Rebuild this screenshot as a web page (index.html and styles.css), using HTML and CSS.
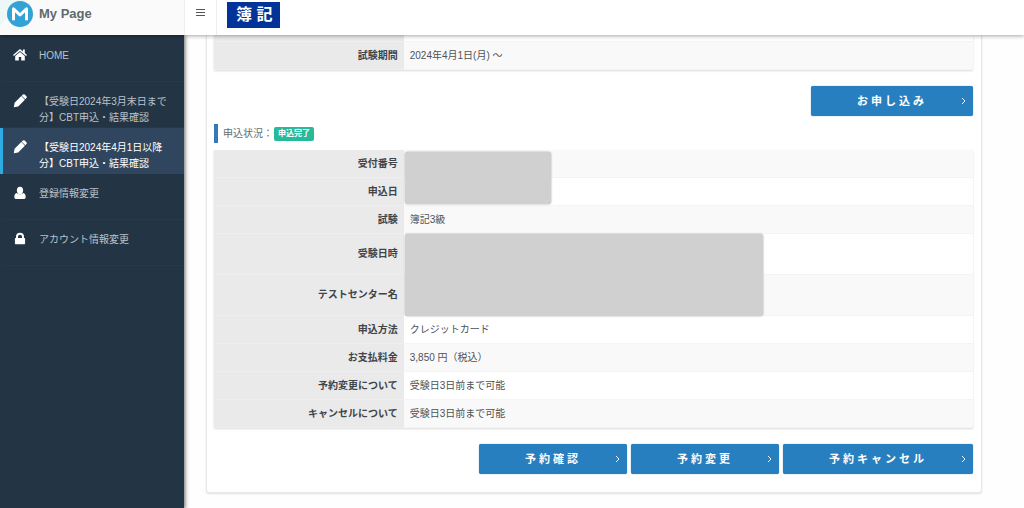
FILE: index.html
```
<!DOCTYPE html>
<html lang="ja">
<head>
<meta charset="utf-8">
<meta name="viewport" content="width=device-width, initial-scale=1">
<title>My Page</title>
<link rel="stylesheet" href="styles.css">
</head>
<body>
<svg class="sprite" aria-hidden="true">
  <symbol id="pencil" viewBox="0 0 14 14">
    <path d="M.8 13.200l.8-4.400L8.300 2.100 11.900 5.700 5.200 12.400zM8.700 1.700L9.900.6q.9-.8 1.800 0l1.700 1.700q.8.900 0 1.800l-1.100 1.200z"/>
  </symbol>
  <symbol id="chevron" viewBox="0 0 5 8">
    <path d="M1 1l3 3-3 3"/>
  </symbol>
</svg>
<header class="header">
  <a class="brand" href="#">
    <svg class="brand-mark" viewBox="0 0 26 26" aria-hidden="true">
      <circle cx="13" cy="13" r="13"/>
      <path d="M6.500 19.200V7.800L13 14l6.500-6.200V19.200"/>
    </svg>
    <span>My Page</span>
  </a>
  <button class="toggle" type="button" aria-label="メニュー">
    <svg viewBox="0 0 9 9" aria-hidden="true"><path d="M0 1.500h9M0 4.500h9M0 7.500h9"/></svg>
  </button>
  <a class="logo" href="#">簿 記</a>
</header>
<div class="layout">
  <nav class="sidebar">
    <a class="item" href="#">
      <svg class="icon" viewBox="0 0 14 14" aria-hidden="true"><path d="M7 1L0 7l.9 1L7 2.900 13.100 8l.9-1-2.200-1.900V1.600H9.900v1.900zM7 4L2.200 8v4.600h3.600V9h2.400v3.600h3.600V8z"/></svg>
      <span>HOME</span>
    </a>
    <a class="item" href="#">
      <svg class="icon" aria-hidden="true"><use href="#pencil"/></svg>
      <span>【受験日2024年3月末日まで分】CBT申込・結果確認</span>
    </a>
    <a class="item active" href="#" aria-current="page">
      <svg class="icon" aria-hidden="true"><use href="#pencil"/></svg>
      <span>【受験日2024年4月1日以降分】CBT申込・結果確認</span>
    </a>
    <a class="item" href="#">
      <svg class="icon" viewBox="0 0 14 14" aria-hidden="true"><ellipse cx="7" cy="4.400" rx="3.100" ry="3.600"/><path d="M3.700 6.900Q7 9.800 10.300 6.900 12.700 7.300 12.700 11.200q0 1.800-1.700 1.800H3Q1.300 13 1.300 11.200 1.300 7.300 3.700 6.900z"/></svg>
      <span>登録情報変更</span>
    </a>
    <a class="item" href="#">
      <svg class="icon" viewBox="0 0 14 14" aria-hidden="true"><path fill-rule="evenodd" d="M3 6V4.800a4 4 0 0 1 8 0V6h.4q.7 0 .7.7v4.800q0 .7-.7.700H2.600q-.7 0-.7-.7V6.700q0-.7.7-.7zM5 6h4V4.800a2 2 0 0 0-4 0z"/></svg>
      <span>アカウント情報変更</span>
    </a>
  </nav>
  <main class="main">
    <section class="card">
      <table class="info">
        <tbody>
          <tr class="partial"><th></th><td></td></tr>
          <tr class="shaded"><th scope="row">試験期間</th><td>2024年4月1日(月) ～</td></tr>
        </tbody>
      </table>
      <div class="actions">
        <button class="btn" type="button">お申し込み<svg aria-hidden="true"><use href="#chevron"/></svg></button>
      </div>
      <h2 class="status">申込状況：<span class="badge">申込完了</span></h2>
      <table class="info">
        <tbody>
          <tr class="shaded"><th scope="row">受付番号</th><td class="masked"><span class="mask mask-small"></span></td></tr>
          <tr><th scope="row">申込日</th><td></td></tr>
          <tr class="shaded"><th scope="row">試験</th><td>簿記3級</td></tr>
          <tr class="tall"><th scope="row">受験日時</th><td class="masked"><span class="mask mask-large"></span></td></tr>
          <tr class="tall shaded"><th scope="row">テストセンター名</th><td></td></tr>
          <tr><th scope="row">申込方法</th><td>クレジットカード</td></tr>
          <tr class="shaded"><th scope="row">お支払料金</th><td>3,850 円（税込）</td></tr>
          <tr><th scope="row">予約変更について</th><td>受験日3日前まで可能</td></tr>
          <tr class="shaded"><th scope="row">キャンセルについて</th><td>受験日3日前まで可能</td></tr>
        </tbody>
      </table>
      <div class="actions">
        <button class="btn" type="button">予約確認<svg aria-hidden="true"><use href="#chevron"/></svg></button>
        <button class="btn" type="button">予約変更<svg aria-hidden="true"><use href="#chevron"/></svg></button>
        <button class="btn" type="button">予約キャンセル<svg aria-hidden="true"><use href="#chevron"/></svg></button>
      </div>
    </section>
  </main>
</div>
</body>
</html>
```

FILE: styles.css
```
* {
  box-sizing: border-box;
}

body {
  margin: 0;
  min-height: 100vh;
  display: flex;
  flex-direction: column;
  background: #fefefe;
  color: #4d5357;
  font: 10px/16px "Liberation Sans", "Noto Sans CJK JP", sans-serif;
}

a {
  color: inherit;
  text-decoration: none;
}

.sprite {
  position: absolute;
  width: 0;
  height: 0;
}

/* Header */
.header {
  position: sticky;
  top: 0;
  z-index: 2;
  display: flex;
  height: 35px;
  background: #fff;
  box-shadow: 0 1px 4px rgba(0, 0, 0, 0.35);
}

.brand {
  width: 184px;
  display: flex;
  align-items: center;
  gap: 6px;
  padding: 0 7px 7px;
  background: linear-gradient(135deg, #eef7f8 18px, #fafafa 18px);
  color: #5f696f;
  font-size: 13px;
  font-weight: bold;
}

.brand-mark {
  width: 26px;
  height: 26px;
}

.brand-mark circle {
  fill: #33a2d4;
}

.brand-mark path {
  fill: none;
  stroke: #fff;
  stroke-width: 3;
  stroke-linejoin: round;
}

.toggle {
  width: 33px;
  display: flex;
  align-items: center;
  justify-content: center;
  padding: 0 0 10px;
  border: solid #eee;
  border-width: 0 1px;
  background: none;
}

.toggle svg {
  width: 9px;
  height: 9px;
}

.toggle path {
  stroke: #555;
}

.logo {
  margin: 2px 10px 7px;
  padding: 0 8px 0 9px;
  background: #013399;
  color: #fff;
  font-size: 16px;
  font-weight: bold;
  line-height: 26px;
}

/* Sidebar */
.layout {
  flex: 1;
  display: flex;
}

.sidebar {
  width: 184px;
  flex: none;
  padding-top: 1px;
  background: #233444;
  box-shadow: 1px 0 4px rgba(0, 0, 0, 0.6);
  color: #b9c3cc;
}

.item {
  display: flex;
  gap: 12px;
  min-height: 46px;
  padding: 12px 8px 2px 10px;
  border-left: 3px solid transparent;
  box-shadow: inset 0 -1px #273848;
}

.item.active {
  border-left-color: #2eabe2;
  background: #30465e;
  box-shadow: none;
  color: #fff;
}

.icon {
  width: 14px;
  height: 14px;
  flex: none;
  fill: #fff;
}

/* Content */
.main {
  flex: 1;
  min-width: 0;
  padding: 0 42px 16px 22px;
}

.card {
  padding: 0 8px 18px 7px;
  border: 1px solid #e8e8e8;
  border-top: 0;
  border-radius: 0 0 3px 3px;
  background: #fff;
  box-shadow: 0 1px 2px rgba(0, 0, 0, 0.12);
}

.info {
  width: 100%;
  table-layout: fixed;
  border-collapse: separate;
  border-spacing: 0;
  box-shadow: 0 1px 2px rgba(0, 0, 0, 0.15);
}

.info th,
.info td {
  height: 28px;
  padding: 5px 6px;
  border-bottom: 1px solid #f4f4f4;
  text-align: left;
}

.info th {
  width: 25%;
  border-bottom-color: #eee;
  background: #eaeaea;
  color: #3f4448;
  text-align: right;
}

.info .shaded td {
  background: #f9f9f9;
}

.info .tall th,
.info .tall td {
  height: 41px;
}

.info .partial th,
.info .partial td {
  height: 7px;
  padding: 0;
}

.info .masked {
  position: relative;
}

.mask {
  position: absolute;
  z-index: 1;
  left: 1px;
  border-radius: 3px;
  background: #d0d0d0;
  box-shadow: 0 0 2px #999;
}

.mask-small {
  top: 2px;
  width: 146px;
  height: 52px;
}

.mask-large {
  top: 0;
  width: 358px;
  height: 82px;
}

.actions {
  display: flex;
  flex-wrap: wrap;
  justify-content: flex-end;
  gap: 4px;
  margin-top: 16px;
}

.btn {
  position: relative;
  height: 30px;
  padding: 0 46px;
  border: 0;
  border-radius: 2px;
  background: #287fc0;
  box-shadow: 0 0 1px #287fc0;
  color: #fff;
  font: bold 11px/16px "Liberation Sans", "Noto Sans CJK JP", sans-serif;
  letter-spacing: 3px;
}

.btn svg {
  position: absolute;
  top: 11px;
  right: 7px;
  width: 5px;
  height: 8px;
  fill: none;
  stroke: #fff;
}

.status {
  display: flex;
  align-items: center;
  height: 19px;
  margin: 8px 0 7px;
  padding-left: 5px;
  border-left: 4px solid #337ab7;
  color: #666c70;
  font-size: 10px;
  font-weight: normal;
}

.badge {
  padding: 0 4px;
  margin-left: 1px;
  border-radius: 2px;
  background: #26b99a;
  color: #fff;
  font-size: 8px;
  font-weight: bold;
  line-height: 14px;
}
```
